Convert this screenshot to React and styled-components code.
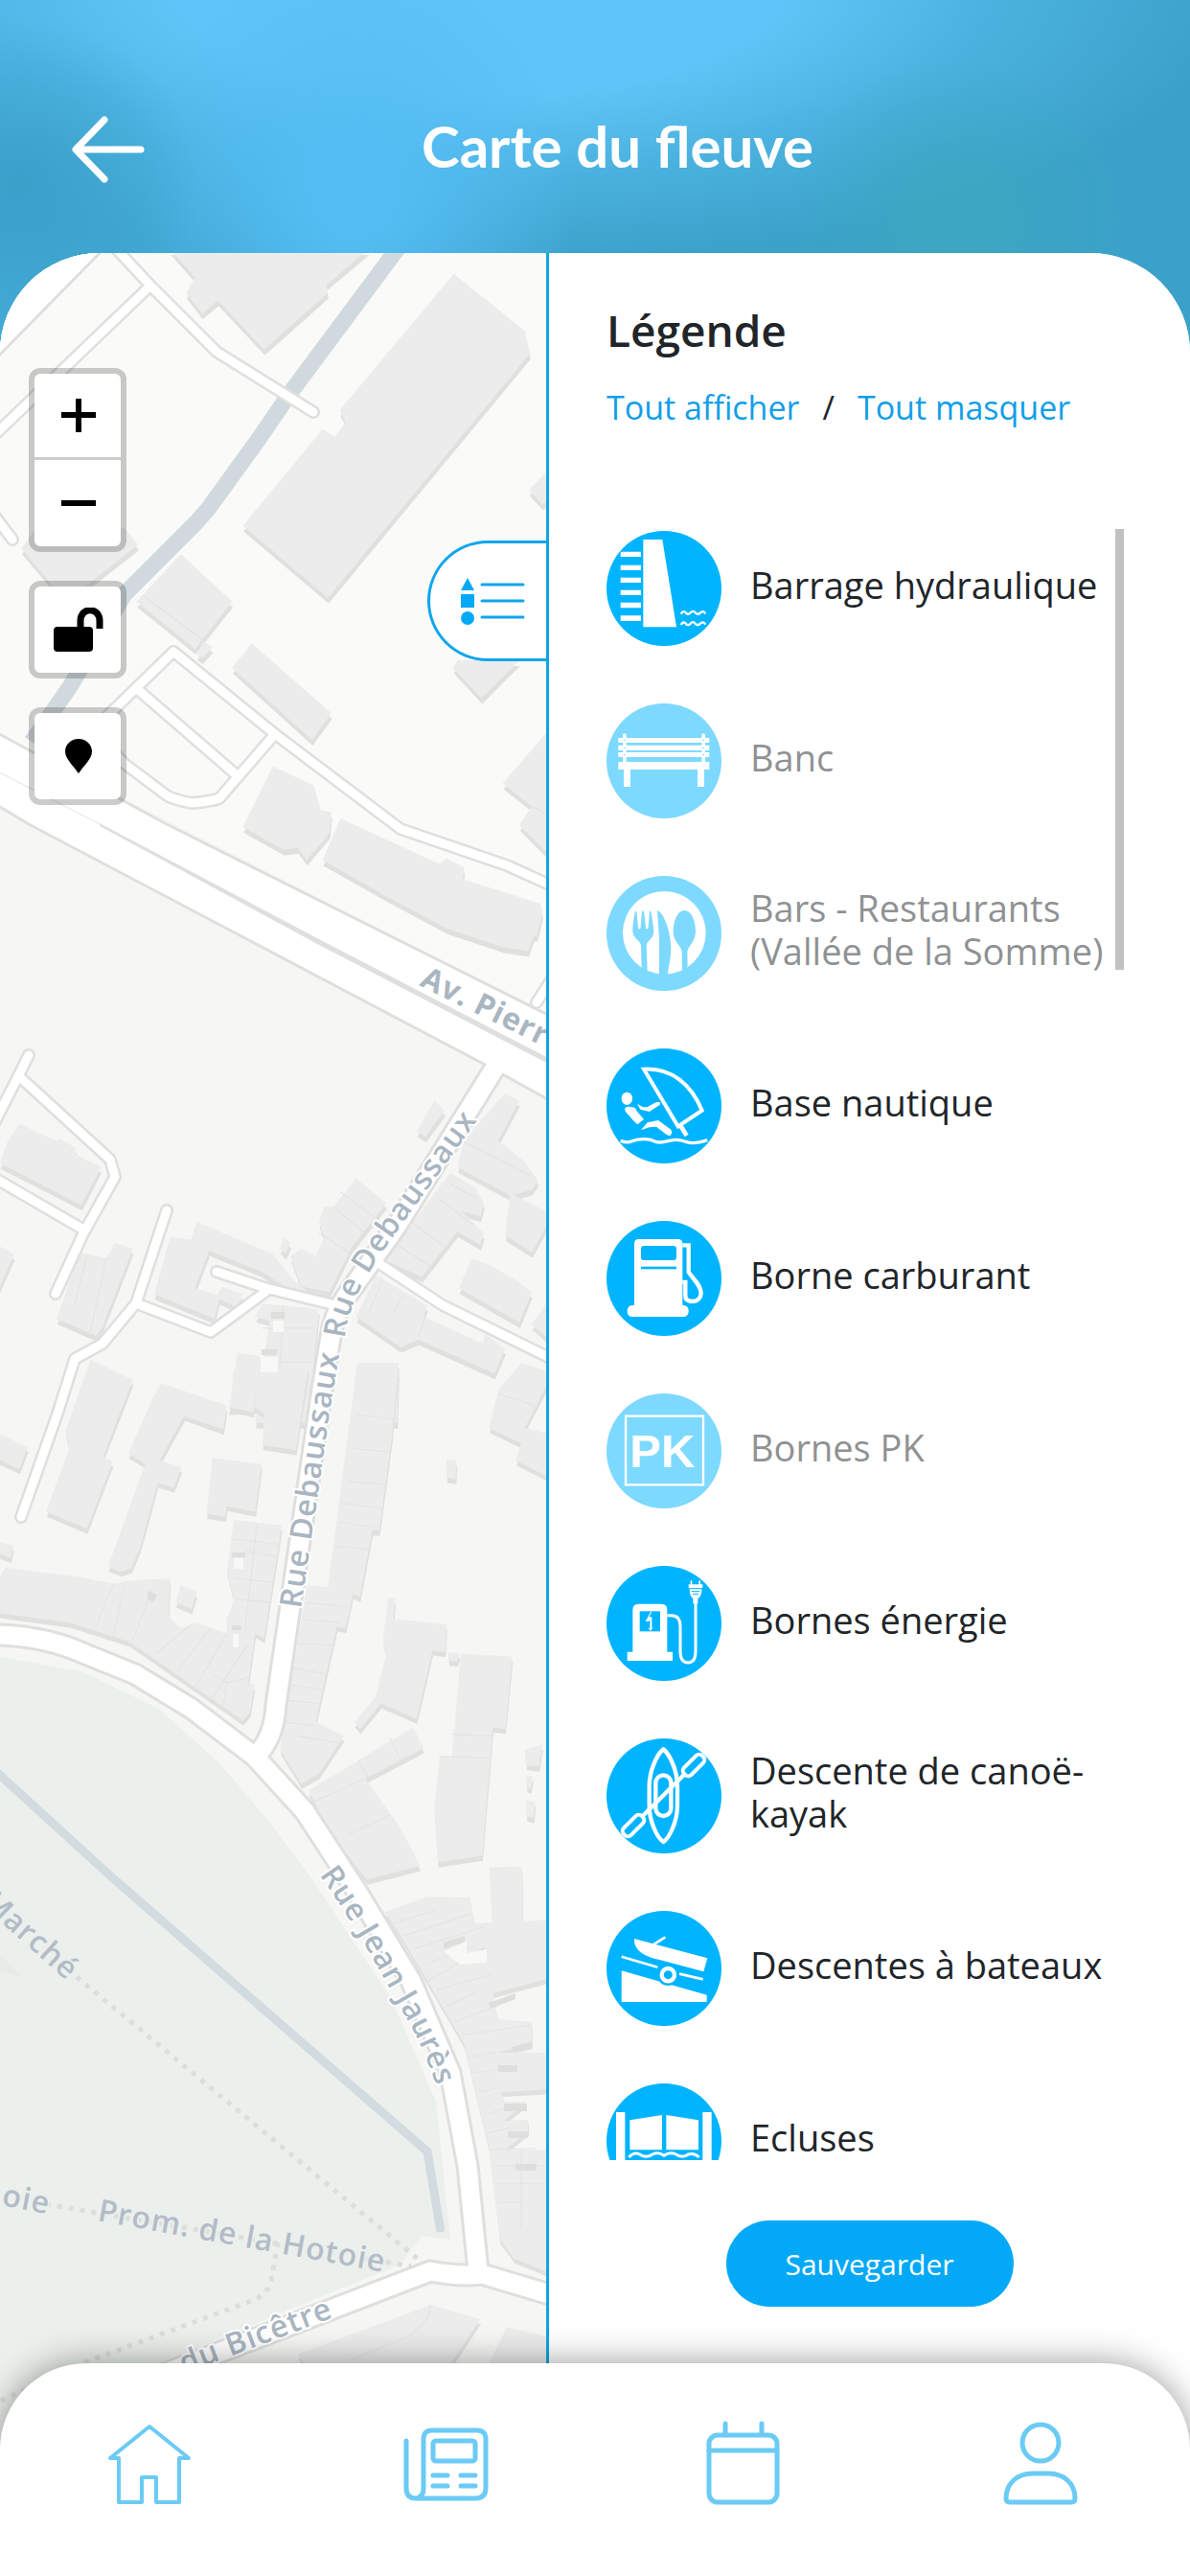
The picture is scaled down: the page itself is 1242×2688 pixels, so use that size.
import React, { useState } from 'react';
import styled, { createGlobalStyle } from 'styled-components';

const GlobalStyle = createGlobalStyle`
  *, *::before, *::after { box-sizing: border-box; }
  body { margin: 0; background: #fff; font-family: "Open Sans", "Noto Sans", sans-serif; color: #212529; }
  button { font: inherit; color: inherit; border: 0; padding: 0; margin: 0; background: none; cursor: pointer; }
  svg { display: block; }
`;

const Screen = styled.div`
  display: flex;
  flex-direction: column;
  height: 100vh;
  background:
    linear-gradient(#fff, #fff) 0 400px / 100% 100% no-repeat,
    radial-gradient(ellipse 190px 170px at 20px 190px, rgba(58, 158, 200, 0.9), rgba(58, 158, 200, 0)) no-repeat,
    radial-gradient(ellipse 180px 170px at 1000px 230px, rgba(60, 168, 192, 0.9), rgba(60, 168, 192, 0)) no-repeat,
    radial-gradient(ellipse 230px 260px at 370px 200px, #54bdf3 15%, rgba(84, 189, 243, 0)) no-repeat,
    radial-gradient(ellipse 800px 300px at 500px -20px, #5fc5f8 40%, rgba(90, 194, 244, 0.5) 68%, rgba(90, 190, 240, 0)) no-repeat,
    linear-gradient(90deg, #42abd6, #3ba1c9 50%, #3ba1c9);
`;

const Header = styled.header`
  display: flex;
  flex: none;
  align-items: center;
  height: 264px;
  padding: 48px 104px 0 75px;
`;

const BackButton = styled.button`
  width: 76px;
  height: 72px;
`;

const Title = styled.h1`
  flex: 1;
  margin: 0;
  padding-bottom: 8px;
  color: #fff;
  font: 700 60px/72px Lato, "Open Sans", sans-serif;
  text-align: center;
`;

const Main = styled.main`
  display: grid;
  flex: 1;
  grid-template-columns: 570fr 672fr;
  grid-template-rows: minmax(0, 1fr);
  min-height: 0;
  margin-bottom: -104px;
  border-radius: 104px 104px 0 0;
  background: #fff;
  overflow: hidden;
`;

const MapArea = styled.section`
  position: relative;
  overflow: hidden;
  background: #f6f6f5;
`;

const MapDrawing = styled.svg`
  position: absolute;
  inset: 0;
  width: 100%;
  height: 100%;
`;

const StreetName = styled.text`
  font-family: "Open Sans", sans-serif;
  font-size: 32px;
  font-weight: ${(p) => (p.$strong ? 700 : 600)};
  letter-spacing: 1px;
  fill: ${(p) => (p.$park ? '#b3bcc8' : '#a9b6c1')};
  stroke: ${(p) => (p.$park ? '#ebf0ec' : '#fff')};
  stroke-width: 4px;
  stroke-linejoin: round;
  paint-order: stroke;
`;

const MapControls = styled.div`
  position: absolute;
  top: 120px;
  left: 30px;
  display: flex;
  flex-direction: column;
  gap: 30px;
`;

const ControlGroup = styled.div`
  display: flex;
  flex-direction: column;
  width: 102px;
  border: 6px solid rgba(0, 0, 0, 0.2);
  border-radius: 12px;
  background: #fff;
  background-clip: padding-box;
`;

const ControlButton = styled.button`
  display: flex;
  align-items: center;
  justify-content: center;
  height: 90px;
  padding-left: 2px;
  &:not(:last-child) { border-bottom: 3px solid #ccc; }
`;

const LegendTab = styled.button`
  position: absolute;
  top: 300px;
  right: 0;
  display: flex;
  align-items: center;
  justify-content: flex-end;
  width: 124px;
  height: 126px;
  padding-right: 22px;
  border: 3px solid #0fa5ed;
  border-right: 0;
  border-radius: 63px 0 0 63px;
  background: #fff;
`;

const Legend = styled.aside`
  display: flex;
  flex-direction: column;
  min-height: 0;
  padding: 50px 0 163px;
  border-left: 3px solid #0fa5e0;
  background: #fff;
`;

const LegendTitle = styled.h2`
  margin: 0 60px 26px;
  font-size: 46px;
  font-weight: 600;
  line-height: 60px;
`;

const LegendActions = styled.div`
  display: flex;
  gap: 24px;
  margin: 0 60px 102px;
  font-size: 34px;
  font-weight: 500;
  line-height: 50px;
`;

const LinkButton = styled.button`
  color: #129ee8;
  white-space: nowrap;
`;

const ListArea = styled.div`
  display: flex;
  flex: 1;
  min-height: 0;
  margin: 0 69px 63px 60px;
`;

const LegendList = styled.ul`
  flex: 1;
  margin: 0;
  padding: 2px 0 0;
  list-style: none;
  overflow-y: auto;
  scrollbar-width: none;
`;

const LegendItem = styled.li`
  margin-bottom: 60px;
`;

const LegendToggle = styled.button`
  display: flex;
  align-items: center;
  gap: 30px;
  width: 100%;
  height: 120px;
  text-align: left;
  font-size: 38px;
  line-height: 45px;
  opacity: ${(p) => (p.$on ? 1 : 0.5)};
`;

const ItemIcon = styled.svg`
  flex: none;
  width: 120px;
  height: 120px;
`;

const ItemLabel = styled.span`
  padding-bottom: 8px;
`;

const ScrollTrack = styled.div`
  width: 9px;
`;

const ScrollThumb = styled.div`
  height: 27%;
  background: #c1c1c1;
`;

const SaveButton = styled.button`
  align-self: center;
  flex: none;
  width: 300px;
  height: 90px;
  border-radius: 45px;
  background: #03a9f7;
  color: #fff;
  font-size: 30px;
  font-weight: 500;
`;

const BottomNav = styled.nav`
  position: relative;
  display: grid;
  flex: none;
  grid-template-columns: repeat(4, 1fr);
  justify-items: center;
  padding: 60px 0 72px;
  border-radius: 90px 90px 0 0;
  background: #fff;
  box-shadow: 0 0 36px rgba(0, 0, 0, 0.4);
`;

const NavLink = styled.a`
  width: 90px;
  height: 90px;
`;

const NavIcon = styled.svg.attrs({ viewBox: '0 0 90 90', 'aria-hidden': true })`
  width: 90px;
  height: 90px;
  fill: none;
  stroke: #6bcbf5;
  stroke-width: 5;
  stroke-linecap: round;
  stroke-linejoin: round;
`;

/* ---------- map data ---------- */

const BLOCKS = [
  {
    transform: 'matrix(0.37 0 0 0.3954 0 260)',
    shapes: [
      '480,0 550,75 525,115 570,170 615,135 745,265 925,115 920,95 1040,0',
      '1280,65 1480,215 1495,275 925,920 685,730 910,475 945,495 975,455 958,425',
      '60,790 100,740 350,735 390,780 240,890 150,890',
      '510,805 655,930 570,1030 550,1055 385,930',
      '575,1035 600,1050 570,1080 555,1070',
      '710,1040 935,1225 880,1295 655,1105',
      '1560,570 1492,635 1530,675 1560,650',
      '1290,1085 1278,1105 1358,1185 1465,1085',
      '770,1365 885,1415 905,1480 935,1485 930,1540 865,1612 840,1580 800,1585 685,1525',
      '1560,1255 1418,1410 1500,1470 1465,1520 1560,1610',
    ],
    seams: 'M405 915L570 1030 M1500 1470L1560 1500',
  },
  {
    transform: 'matrix(0.37 0 0 0.3954 0 860)',
    shapes: [
      '960,-15 1240,105 1260,90 1310,115 1305,145 1525,210 1530,235 1515,295 1505,295 1490,335 1420,325 1260,275 1090,190 910,95',
      '55,790 155,835 170,830 215,855 210,870 285,905 230,1005 0,895 20,840',
      '-10,1110 40,1135 -10,1240',
      '225,1130 300,1145 325,1105 375,1120 290,1325 270,1350 160,1305',
      '555,1050 770,1135 825,1200 900,1260 820,1230 735,1180 590,1125 550,1225 620,1245 605,1305 435,1240 480,1090 540,1095',
      '625,1220 685,1240 670,1275 610,1250',
      '1005,935 1090,1000 990,1120 930,1235 850,1220 820,1140 850,1120 890,1140 915,1090 900,1050 915,1010 940,1010',
      '800,1090 820,1105 805,1135 790,1120',
      '1225,730 1255,755 1200,825 1175,810',
      '1425,710 1465,730 1405,835 1480,890 1518,940 1500,965 1440,980 1290,905 1310,830',
      '1270,920 1340,960 1365,1000 1355,1035 1300,1020 1365,1080 1355,1110 1290,1075 1190,1195 1085,1150',
      '1440,975 1560,1030 1500,1130 1425,1085',
      '1330,1145 1385,1165 1450,1200 1500,1235 1465,1315 1295,1225',
      '1560,1240 1500,1320 1560,1370',
      '1060,1190 1205,1270 1195,1300 1360,1370 1370,1345 1425,1385 1395,1450 1180,1360 1130,1380 1005,1300',
      '740,1265 900,1280 870,1580 720,1580 760,1310 720,1300',
      '670,1395 735,1405 725,1540 645,1545',
      '1020,1430 1125,1445 1120,1580 1008,1580',
    ],
    seams:
      'M245 1140L210 1270 M300 1145L255 1340 M960 970L1060 1040 M940 1010L1030 1080 M900 1080L985 1130 M1310 840L1500 930 M1270 950L1350 990 M1240 990L1340 1060 M1160 1050L1260 1120 M1120 1110L1220 1170 M1080 1200L1040 1290 M1140 1240L1110 1290 M1200 1300L1180 1350 M740 1330H890 M740 1420H880 M730 1500H880 M800 1270L780 1560',
  },
  {
    transform: 'matrix(0.37 0 0 0.3571 0 1440)',
    shapes: [
      '-10,155 78,195 55,260 -10,230',
      '-10,470 38,485 30,520 -10,505',
      '720,-40 870,-40 835,205 740,190 745,100 720,80',
      '660,-30 725,-30 715,95 648,80',
      '255,-60 375,0 290,225 318,238 245,435 130,385 195,200 185,150',
      '455,9 640,75 630,145 520,105 450,235 512,255 490,315 445,300 395,490 370,550 340,560 305,545 410,245 362,215 430,55',
      '600,228 738,245 720,385 640,368 635,400 582,390',
      '660,408 795,425 745,755 720,740 700,885 718,890 705,970 685,995 365,765 200,710 -10,680 -10,590 15,548 220,575 320,595 375,585 480,580 475,690 510,725 555,710 640,740 640,700 660,640 640,560',
      '510,600 555,620 540,670 495,650',
      '1008,-50 1125,-50 1105,170 1070,440 1050,440 1015,635 995,625 975,725 950,720 890,1000 970,1040 900,1150 850,1180 790,1080 865,600 925,605',
      '1470,-50 1560,-20 1480,140 1560,160 1560,290 1455,235 1470,185 1380,140 1405,30',
      '1260,232 1288,235 1285,290 1260,285',
      '1095,635 1115,640 1110,698 1260,715 1255,795 1220,790 1175,990 1075,945 1015,1020 1000,1000 1060,925 1090,800 1080,760',
      '1300,800 1445,808 1425,1020 1390,1015 1360,1390 1235,1410 1225,1250 1240,1100 1275,1100',
      '1265,795 1298,798 1290,822 1265,820',
      '1165,1015 1195,1075 1030,1165 1130,1310 1185,1420 1035,1460 935,1330 870,1200',
      '1480,1080 1530,1065 1520,1130 1485,1125',
      '1485,1155 1503,1160 1497,1195 1485,1190',
      '1485,1230 1510,1230 1505,1280 1485,1275',
      '1380,1425 1472,1422 1475,1620 1390,1620',
    ],
    seams:
      'M1005 100L1110 115 M995 200L1095 210 M980 295L1085 305 M965 360L1075 375 M955 415L1060 430 M945 485L1040 495 M865 650L990 665 M860 700L960 710 M835 770L945 775 M820 840L920 860 M815 890L910 905 M805 935L895 945 M800 1000L890 1010 M840 1040L950 1060 M655 465L790 480 M690 500L780 515 M665 580L770 590 M665 640L760 650 M725 420L690 740 M320 595L270 720 M350 600L320 750 M430 610L375 760 M540 715L440 800 M590 730L500 850 M640 740L550 900 M700 770L600 930 M600 860L640 885L700 870 M640 885L630 950 M1100 1045L1130 1110 M1010 1110L1040 1165 M890 1230L1030 1165 M980 1330L1100 1270 M1275 1035L1390 1040 M1240 1100L1380 1105 M1405 40L1510 75',
  },
  {
    transform: 'matrix(0.37 0 0 0.3333 0 1960)',
    shapes: [
      '1085,105 1205,58 1325,60 1340,140 1560,130 1560,310 1390,360 1405,440 1500,450 1500,520 1400,545 1560,545 1560,660 1410,670 1425,700 1485,700 1420,760 1490,755 1490,790 1425,850 1560,850 1560,1240 1450,1190 1410,1130 1380,850 1310,520 1210,330 1130,180',
      '1215,1335 1355,1380 1260,1540 870,1540 840,1490',
      '1430,1405 1560,1440 1560,1540 1370,1540',
    ],
    seams:
      'M1110 140L1230 100 M1140 180L1330 110 M1170 220L1370 150 M1200 270L1340 210 M1210 320L1300 260 M1230 350L1390 300 M1260 400L1340 360 M1280 450L1400 400 M1300 490L1500 460 M1320 560L1400 545 M1330 610L1460 590 M1350 670L1410 655 M1365 740L1430 720 M1370 800L1440 780 M1380 850L1510 845 M1390 900H1560 M1395 955H1560 M1405 1015H1480 M1470 850V1100 M1215 1335L1205 1380 1160 1430 985 1510',
  },
];

const SERVICE_ROADS = [
  'M118 256L157 298 226 367 327 430',
  'M157 298L-10 458',
  'M-6 538L13 563',
  'M105 754L181 680 287 766 418 865 529 903 582 927',
  'M142 718L246 808',
  'M287 766L229 833Q222 836 200 838Q180 834 174 830L130 797 105 770',
  'M30 1101L18 1125-6 1172',
  'M22 1125L115 1210 120 1228 87 1287 58 1350',
  'M-6 1229L87 1283',
  'M174 1263L142 1360 107 1402 78 1418 60 1475 22 1583',
  'M142 1360L220 1390 277 1348',
  'M226 1327L277 1344 350 1362',
  'M392 1316L462 1362 580 1420',
  'M560 1046L590 1000',
];

const STREETS = [
  'M516 1115L414 1279 362 1352Q348 1372 345 1395L336 1450 303 1676 288 1779Q286 1815 266 1833',
  'M-10 1706H0Q50 1708 89 1726L141 1747 200 1783 266 1833 318 1890 374 1976 429 2067 470 2163 488 2260 499 2370',
  'M80 2512L449 2370Q480 2376 503 2373L580 2396',
];

function RiverMap() {
  return (
    <MapDrawing viewBox="0 264 570 2306" preserveAspectRatio="xMinYMin slice" role="img" aria-label="Plan">
      <defs>
        <path id="n1" d="M437 1028L620 1118" />
        <path id="n2" d="M360 1397C364 1350 398 1308 428 1266L510 1153" />
        <path id="n3" d="M314 1679L334 1545 343 1480 358 1390" />
        <path id="n4" d="M333 1956C373 2012 393 2052 414 2088S443 2140 464 2200" />
        <path id="n5" d="M-20 1985C0 2008 30 2030 90 2086" />
        <path id="n6" d="M1 2301L80 2316" />
        <path id="n7" d="M101 2317L440 2378" />
        <path id="n8" d="M192 2477L380 2406" />
      </defs>
      <rect y="264" width="570" height="2306" fill="#f6f6f5" />
      <path d="M0 264H570V1060L0 766Z" fill="#fafaf8" />
      <path d="M0 1729L85 1744 166 1783 229 1840 281 1901 325 1960 407 2083 455 2193 470 2337 440 2333 418 2363 130 2480 0 2560Z" fill="#ebf0ec" />
      <path d="M0 2040L24 2063 0 2056Z" fill="#e6ebe6" />
      <path d="M-10 380L110 258H-10Z" fill="#fff" stroke="#dfdfde" strokeWidth="3" />
      <path d="M416 258L303 410 270 458 218 530 205 545 130 620 74 715 33 774" fill="none" stroke="#d0dade" strokeWidth="17" />
      <path d="M-8 1845L118 1960 446 2245 460 2329" fill="none" stroke="#d2dbe0" strokeWidth="9" />
      <g fill="none" stroke="#dbdedb" strokeWidth="5" strokeDasharray="5 7">
        <path d="M80 2063L437 2358" />
        <path d="M48 2300L429 2365" />
        <path d="M290 2340L283 2380Q280 2393 265 2400L89 2465-10 2510" />
      </g>
      {BLOCKS.map((b) => (
        <g key={b.transform} transform={b.transform}>
          <g fill="#e0e0df" transform="translate(2 15)">
            {b.shapes.map((s) => <polygon key={s} points={s} />)}
          </g>
          <g fill="#ececec">
            {b.shapes.map((s) => <polygon key={s} points={s} />)}
          </g>
          <path d={b.seams} fill="none" stroke="#e3e3e3" strokeWidth="3" />
        </g>
      ))}
      <g fill="#dededd">
        <path d="M283 1369H297V1376H283ZM273 1408H289V1414H273ZM463 2027L485 2020V2026L463 2034ZM487 2040L506 2032V2038L488 2046ZM510 2090L538 2080V2086L512 2096ZM534 2136L556 2130V2136L536 2141ZM520 2155H540V2162H520ZM526 2195H550V2203H526ZM530 2224H551V2231H530ZM538 2258H560V2265H538Z" />
        <path d="M242 1620H256V1625H242ZM242 1696H252V1701H242ZM154 1660L164 1664 160 1672 154 1668Z" />
      </g>
      <path d="M244 1626H254V1637H244ZM243 1705H249V1719H243ZM285 1378H296V1390H285ZM272 1416H290V1432H272ZM463 2036L487 2026 487 2038 508 2034 508 2048 480 2050Z" fill="#f8f8f7" />
      <g fill="none" strokeLinecap="round" strokeLinejoin="round">
        <g stroke="#dfdfde">
          {SERVICE_ROADS.map((d) => <path key={d} d={d} strokeWidth="14" />)}
          {STREETS.map((d) => <path key={d} d={d} strokeWidth="25" />)}
          <path d="M-10 761L174 860 582 1064V1153L510 1113 30 860-10 836Z" fill="#fff" strokeWidth="3" />
        </g>
        <g stroke="#fff">
          {SERVICE_ROADS.map((d) => <path key={d} d={d} strokeWidth="9" />)}
          {STREETS.map((d) => <path key={d} d={d} strokeWidth="19" />)}
        </g>
      </g>
      <path d="M-10 801L104 860" stroke="#e3e3e2" strokeWidth="1" />
      <path d="M104 859L333 980 580 1108V1114L333 986 104 862Z" fill="#dfdfde" />
      <StreetName $strong><textPath href="#n1">Av. Pierre</textPath></StreetName>
      <StreetName><textPath href="#n2">Rue Debaussaux</textPath></StreetName>
      <StreetName><textPath href="#n3">Rue Debaussaux</textPath></StreetName>
      <StreetName><textPath href="#n4">Rue Jean Jaurès</textPath></StreetName>
      <StreetName $park><textPath href="#n5">Marché</textPath></StreetName>
      <StreetName $park><textPath href="#n6">oie</textPath></StreetName>
      <StreetName $park><textPath href="#n7">Prom. de la Hotoie</textPath></StreetName>
      <StreetName><textPath href="#n8">du Bicêtre</textPath></StreetName>
    </MapDrawing>
  );
}

/* ---------- legend pictograms, drawn on a 360 unit disc ---------- */

const BLUE = '#00b4ff';

const DamArt = (
  <g fill="#fff" transform="translate(-24 -45)">
    <path d="M139 72H199L243 346H139Z" />
    <path d="M68 110H132V126H68ZM68 152H132V168H68ZM68 191H132V207H68ZM68 230H132V246H68ZM68 269H132V286H68ZM68 310H132V327H68Z" />
    <path d="M257 305Q265 292 272 301T287 301T302 301T318 301T334 304M257 339Q265 326 272 335T287 335T302 335T318 335T334 338" fill="none" stroke="#fff" strokeWidth="7" />
  </g>
);

const BenchArt = (
  <g fill="#fff" transform="translate(-24 -585)">
    <path d="M61 693H346V708H61ZM61 716H346V732H61ZM61 738H346V753H61ZM61 768H346V792H61ZM78 790H99V846H78ZM309 790H330V846H309Z" />
    <rect x="75" y="679" width="11" height="95" rx="5" />
    <rect x="322" y="679" width="11" height="95" rx="5" />
    <path d="M77 700h6M77 724h6M77 746h6M324 700h6M324 724h6M324 746h6" stroke={BLUE} strokeWidth="3" />
  </g>
);

const RestaurantArt = (
  <g transform="translate(-24 -1125)">
    <circle cx="205" cy="1303" r="130" fill="#fff" />
    <path fill={BLUE} d="M114 1235C109 1260 105 1282 106 1298C107 1322 131 1326 132 1344L134 1420H152L149 1344C150 1326 172 1322 172 1298C171 1280 167 1258 163 1235H159L155 1285C154 1294 147 1294 147 1285L141 1235H135L131 1285C131 1294 124 1294 123 1285L118 1235Z" />
    <path fill={BLUE} d="M183 1234C200 1234 226 1300 226 1350C226 1388 216 1412 216 1440H189V1320Z" />
    <path fill={BLUE} d="M268 1233C291 1233 303 1268 303 1298C303 1330 279 1345 277 1362L278 1422H261L260 1362C258 1345 233 1330 233 1300C233 1268 246 1233 268 1233Z" />
  </g>
);

const SailArt = (
  <g fill="none" stroke="#fff" strokeLinejoin="miter" transform="translate(-24 -45)">
    <path d="M141 110C230 105 290 160 323 239L248 289Z" strokeWidth="12" />
    <path d="M254 284L275 318" strokeWidth="14" />
    <ellipse cx="88" cy="202" rx="17" ry="20" fill="#fff" stroke="none" />
    <path d="M81 234Q86 224 100 229Q116 228 118 240L141 267L121 283Q104 268 94 254Q82 245 81 234Z" fill="#fff" stroke="none" />
    <path d="M120 218L138 229 151 229 180 213H191L192 221 158 243 130 236Z" fill="#fff" stroke="none" />
    <path d="M132 301L152 277 186 270 226 299Q232 311 222 319L211 314 180 290 158 292Z" fill="#fff" stroke="none" />
    <path d="M68 334Q88 342 102 336T138 329T172 335T206 337T240 331T275 338T340 332" strokeWidth="10" />
  </g>
);

const FuelArt = (
  <g transform="translate(-24 -585)">
    <path fill="#fff" d="M111 860V656Q111 642 125 642H248Q262 642 262 656V860Z" />
    <rect x="89" y="849" width="192" height="36" rx="16" fill="#fff" />
    <rect x="132" y="663" width="111" height="45" rx="10" fill={BLUE} />
    <rect x="132" y="728" width="111" height="8" fill={BLUE} />
    <path d="M262 661H281V745C297 770 320 785 320 812Q318 837 292 837Q271 836 271 820V777H262" fill="none" stroke="#fff" strokeWidth="13" />
  </g>
);

const PkArt = (
  <g transform="translate(-24 -1125)">
    <rect x="84" y="1196" width="243" height="215" fill="none" stroke="#fff" strokeWidth="7" />
    <text x="97" y="1356" fill="#fff" fontFamily="Liberation Sans, sans-serif" fontWeight="700" fontSize="147">PK</text>
  </g>
);

const ChargeArt = (
  <g fill="#fff">
    <path d="M82 275V137Q82 119 100 119H172Q190 119 190 137V275Z" />
    <path d="M65 269H207V297H65Z" />
    <path d="M104 142H168V205H104Z" fill={BLUE} />
    <path d="M138 144L122 174H132L136 168V196L130 194L138 204L146 192L142 194V160H133L142 144Z" />
    <path d="M190 155H204Q231 155 231 190V268Q231 303 255 303Q279 303 279 268V100" fill="none" stroke="#fff" strokeWidth="9" />
    <path d="M257 58H301V68H298Q300 92 286 103V118H271V103Q259 92 260 68H257ZM263 46H268V60H263ZM289 46H294V60H289Z" />
    <path d="M259 71H300M266 80H292M270 88H288" stroke={BLUE} strokeWidth="3" />
  </g>
);

const KayakArt = (
  <g fill="none" stroke="#fff" strokeWidth="13" strokeLinejoin="round">
    <path d="M178 34C160 48 134 98 134 150V210C134 262 160 312 178 324C196 312 222 262 222 210V150C222 98 196 48 178 34Z" />
    <rect x="154" y="115" width="48" height="128" rx="24" />
    <path d="M108 248L246 110" />
    <g fill={BLUE} strokeWidth="12">
      <rect x="-40" y="-16" width="80" height="32" rx="14" transform="translate(84 273) rotate(-45)" />
      <rect x="-40" y="-16" width="80" height="32" rx="14" transform="translate(273 84) rotate(-45)" />
    </g>
  </g>
);

const SlipwayArt = (
  <g fill="#fff">
    <path d="M87 87L316 148 304 190 166 153C110 142 85 118 87 87Z" />
    <path d="M146 106L184 82M47 143L160 176M228 197L302 214" stroke="#fff" strokeWidth="8" />
    <path d="M47 187L314 263V285H47Z" />
    <circle cx="193" cy="200" r="34" fill={BLUE} />
    <circle cx="193" cy="200" r="20" fill={BLUE} stroke="#fff" strokeWidth="13" />
  </g>
);

const LockArt = (
  <g fill="#fff">
    <path d="M30 90H58V300H30ZM301 90H329V300H301ZM73 115L174 99V208H73ZM187 99L288 115V208H187Z" />
    <path d="M70 231Q86 213 104 222Q124 236 144 222Q162 213 180 226Q198 213 218 222Q238 236 256 222Q274 216 290 231" fill="none" stroke="#fff" strokeWidth="9" />
    <path d="M70 266Q86 248 104 257Q124 271 144 257Q162 248 180 261Q198 248 218 257Q238 271 256 257Q274 251 290 266" fill="none" stroke="#fff" strokeWidth="9" />
  </g>
);

const ITEMS = [
  { label: 'Barrage hydraulique', art: DamArt, on: true },
  { label: 'Banc', art: BenchArt, on: false },
  { label: 'Bars - Restaurants (Vallée de la Somme)', art: RestaurantArt, on: false },
  { label: 'Base nautique', art: SailArt, on: true },
  { label: 'Borne carburant', art: FuelArt, on: true },
  { label: 'Bornes PK', art: PkArt, on: false },
  { label: 'Bornes énergie', art: ChargeArt, on: true },
  { label: 'Descente de canoë-kayak', art: KayakArt, on: true },
  { label: 'Descentes à bateaux', art: SlipwayArt, on: true },
  { label: 'Ecluses', art: LockArt, on: true },
];

export default function App() {
  const [shown, setShown] = useState(ITEMS.map((i) => i.on));
  const setAll = (value) => setShown(ITEMS.map(() => value));
  const toggle = (index) => setShown(shown.map((v, i) => (i === index ? !v : v)));

  return (
    <Screen>
      <GlobalStyle />
      <Header>
        <BackButton type="button" aria-label="Retour">
          <svg width="76" height="72" viewBox="0 0 76 72" fill="none" stroke="#fff" strokeWidth="7" strokeLinecap="round" strokeLinejoin="round">
            <path d="M72 36H5M34 5L4 36L34 67" />
          </svg>
        </BackButton>
        <Title>Carte du fleuve</Title>
      </Header>

      <Main>
        <MapArea>
          <RiverMap />
          <MapControls>
            <ControlGroup>
              <ControlButton type="button" aria-label="Zoom avant">
                <svg width="36" height="36" viewBox="0 0 36 36"><path d="M0 14H15V0H21V14H36V20H21V35H15V20H0Z" /></svg>
              </ControlButton>
              <ControlButton type="button" aria-label="Zoom arrière">
                <svg width="36" height="36" viewBox="0 0 36 36"><path d="M0 15H36V21H0Z" /></svg>
              </ControlButton>
            </ControlGroup>
            <ControlGroup>
              <ControlButton type="button" aria-label="Déverrouiller la carte">
                <svg width="52" height="46" viewBox="0 0 52 46">
                  <rect y="20" width="41" height="26" rx="4" />
                  <path d="M28 24V14C28 -1 48 -1 48 14V22" fill="none" stroke="#000" strokeWidth="7" />
                </svg>
              </ControlButton>
            </ControlGroup>
            <ControlGroup>
              <ControlButton type="button" aria-label="Ma position">
                <svg width="28" height="36" viewBox="0 0 28 36"><path d="M14 0C22 0 28 6 28 13C28 21 20 27 15 35Q14 36 13 35C8 27 0 21 0 13C0 6 6 0 14 0Z" /></svg>
              </ControlButton>
            </ControlGroup>
          </MapControls>
          <LegendTab type="button" aria-label="Légende">
            <svg width="67" height="49" viewBox="0 0 67 49" fill="#03a9f7">
              <path d="M7 0L14 13H0ZM0 17H14V31H0Z" />
              <circle cx="7" cy="42" r="7" />
              <path d="M22 7H65M22 24H65M22 41H65" stroke="#0fa5ed" strokeWidth="3" strokeLinecap="round" />
            </svg>
          </LegendTab>
        </MapArea>

        <Legend>
          <LegendTitle>Légende</LegendTitle>
          <LegendActions>
            <LinkButton type="button" onClick={() => setAll(true)}>Tout afficher</LinkButton>
            <span>/</span>
            <LinkButton type="button" onClick={() => setAll(false)}>Tout masquer</LinkButton>
          </LegendActions>
          <ListArea>
            <LegendList>
              {ITEMS.map((item, i) => (
                <LegendItem key={item.label}>
                  <LegendToggle type="button" $on={shown[i]} aria-pressed={shown[i]} onClick={() => toggle(i)}>
                    <ItemIcon viewBox="0 0 360 360" aria-hidden="true">
                      <circle cx="180" cy="180" r="180" fill={BLUE} />
                      {item.art}
                    </ItemIcon>
                    <ItemLabel>{item.label}</ItemLabel>
                  </LegendToggle>
                </LegendItem>
              ))}
            </LegendList>
            <ScrollTrack><ScrollThumb /></ScrollTrack>
          </ListArea>
          <SaveButton type="button">Sauvegarder</SaveButton>
        </Legend>
      </Main>

      <BottomNav>
        <NavLink href="#accueil" aria-label="Accueil">
          <NavIcon><path d="M46 6L5 39H14V85H38V59H53V85H77V39H87Z" strokeWidth="4" /></NavIcon>
        </NavLink>
        <NavLink href="#actualites" aria-label="Actualités">
          <NavIcon>
            <path d="M21 19Q21 10 30 10H77Q86 10 86 19V70Q86 81 75 81H13Q3 81 3 70V21M21 19V70Q21 81 12 81" />
            <rect x="31" y="21" width="44" height="21" rx="3" />
            <path d="M31 57H46M60 57H75M31 68H46M60 68H75" />
          </NavIcon>
        </NavLink>
        <NavLink href="#agenda" aria-label="Agenda">
          <NavIcon>
            <rect x="9" y="15" width="71" height="70" rx="9" />
            <path d="M9 31H80M26 3V14M64 3V14" />
          </NavIcon>
        </NavLink>
        <NavLink href="#profil" aria-label="Profil">
          <NavIcon>
            <circle cx="44" cy="23" r="19" />
            <path d="M8 81C8 65 20 55 36 55H52C68 55 80 65 80 81Q80 85 76 85H12Q8 85 8 81Z" />
          </NavIcon>
        </NavLink>
      </BottomNav>
    </Screen>
  );
}
